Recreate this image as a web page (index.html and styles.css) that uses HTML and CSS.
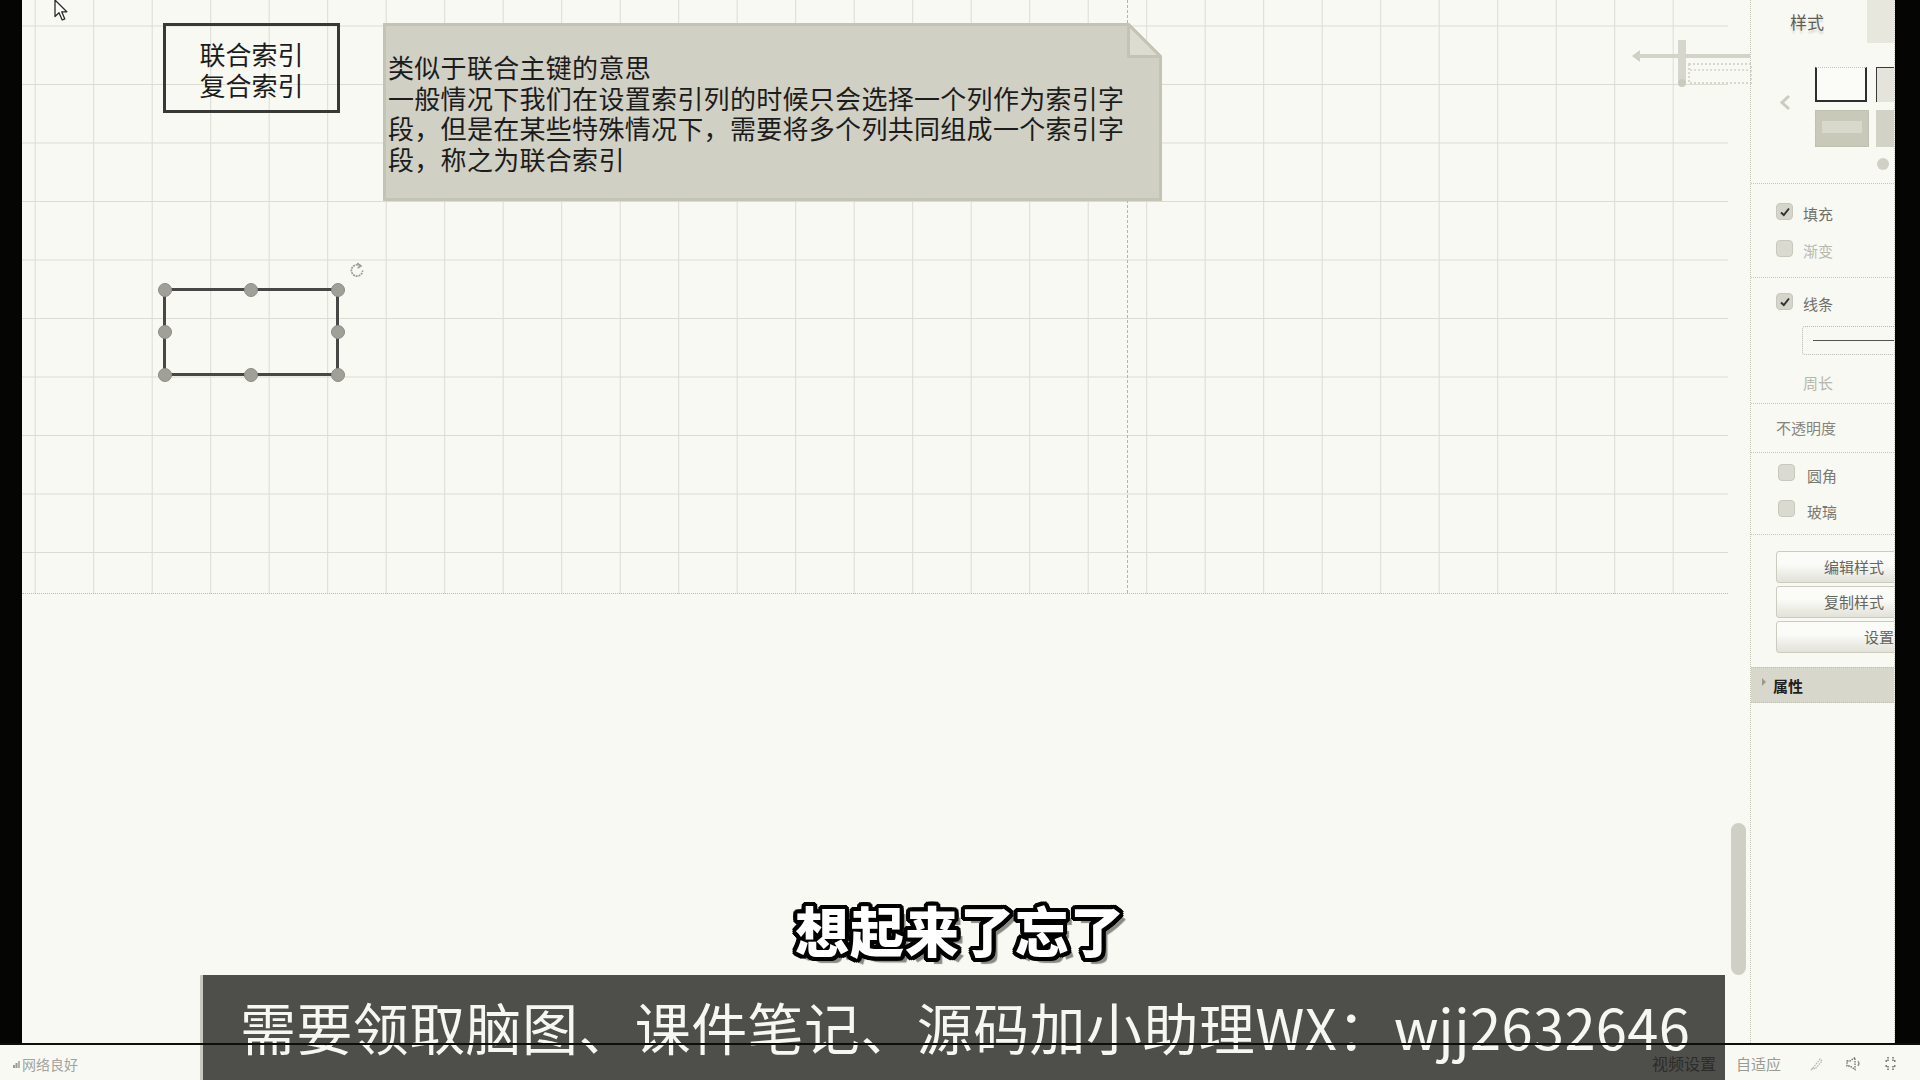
FILE: index.html
```html
<!DOCTYPE html>
<html lang="zh-CN">
<head>
<meta charset="utf-8">
<title>联合索引</title>
<link rel="stylesheet" href="styles.css">
</head>
<body>
<div class="screen">
  <div class="main">
    <div class="edge-left"></div>
    <div class="workspace">
      <div class="canvas">
        <div class="grid"></div>
        <div class="page-break"></div>

        <svg class="cursor" viewBox="0 0 14 23" width="14" height="23">
          <path d="M1 1 L1 17.5 L5 13.8 L8.2 21 L10.8 19.9 L7.7 12.8 L12.8 12.8 Z" fill="#fbfbf8" stroke="#2a2a2a" stroke-width="1.3" stroke-linejoin="round"/>
        </svg>

        <div class="shape-box">联合索引<br>复合索引</div>

        <div class="note">
          <svg class="note-bg" viewBox="0 0 779 178" width="779" height="178">
            <path d="M1.5 1.5 H745.5 L777.5 33.5 V176.5 H1.5 Z" fill="#d0d0c4" stroke="#c4c4b4" stroke-width="3"/>
            <path d="M745.5 1.5 V33.5 H777.5 Z" fill="#dcdcd1" stroke="#c4c4b4" stroke-width="3" stroke-linejoin="round"/>
          </svg>
          <p class="note-text"><span class="nl">类似于联合主键的意思</span><span class="nl">一般情况下我们在设置索引列的时候只会选择一个列作为索引字</span><span class="nl">段，但是在某些特殊情况下，需要将多个列共同组成一个索引字</span><span class="nl">段，称之为联合索引</span></p>
        </div>

        <div class="selection">
          <span class="h h-tl"></span><span class="h h-tc"></span><span class="h h-tr"></span>
          <span class="h h-ml"></span><span class="h h-mr"></span>
          <span class="h h-bl"></span><span class="h h-bc"></span><span class="h h-br"></span>
        </div>
        <svg class="rotate" viewBox="0 0 16 17" width="16" height="17">
          <path d="M11.4 5 A5.6 5.6 0 1 0 13.6 9.6" fill="none" stroke="#9c9c94" stroke-width="1.7" stroke-dasharray="2 0.8"/>
          <path d="M8.2 2.2 L12 4.9 L8.6 7.2" fill="none" stroke="#9c9c94" stroke-width="1.6"/>
        </svg>

        <svg class="ghost" viewBox="0 0 120 50" width="120" height="50">
          <path d="M2 19 L10 13 L10 25 Z" fill="#cfcfc4"/>
          <line x1="8" y1="19" x2="120" y2="19" stroke="#d3d3c9" stroke-width="4"/>
          <rect x="48" y="3" width="8" height="43" fill="#d6d6cc"/>
          <circle cx="52" cy="46" r="4" fill="#cacabf"/>
          <rect x="59" y="27" width="62" height="19" fill="none" stroke="#d8d8ce" stroke-width="2" stroke-dasharray="2 2"/>
          <line x1="60" y1="33" x2="120" y2="33" stroke="#dedcd3" stroke-width="2" stroke-dasharray="2 2"/>
        </svg>
      </div>
      <div class="vscroll"><div class="thumb"></div></div>
    </div>

    <aside class="panel">
      <div class="tab-corner"></div>
      <section class="style-head">
        <div class="tab-title">样式</div>
        <div class="swatches">
          <svg class="chev" viewBox="0 0 12 17" width="12" height="17"><path d="M10 2 L3 8.5 L10 15" fill="none" stroke="#cbcbc0" stroke-width="3"/></svg>
          <div class="sw sw-plain"></div>
          <div class="sw sw-dots"></div>
          <div class="sw sw-fill"><span></span></div>
          <div class="sw sw-fill2"></div>
        </div>
        <div class="more-dot"></div>
      </section>

      <section class="sec sec-fill">
        <div class="row"><span class="cb on"><svg viewBox="0 0 12 12" width="12" height="12"><path d="M2 6.5 L4.8 9 L10 2.5" fill="none" stroke="#333" stroke-width="2"/></svg></span><span class="lbl dark">填充</span></div>
        <div class="row"><span class="cb off"></span><span class="lbl faint">渐变</span></div>
      </section>

      <section class="sec sec-line">
        <div class="row"><span class="cb on"><svg viewBox="0 0 12 12" width="12" height="12"><path d="M2 6.5 L4.8 9 L10 2.5" fill="none" stroke="#333" stroke-width="2"/></svg></span><span class="lbl dark">线条</span></div>
        <div class="line-select"><span class="line-sample"></span></div>
        <div class="perim">周长</div>
      </section>

      <section class="sec sec-opacity">
        <div class="opacity">不透明度</div>
      </section>

      <section class="sec sec-round">
        <div class="row"><span class="cb off"></span><span class="lbl mid">圆角</span></div>
        <div class="row"><span class="cb off"></span><span class="lbl mid">玻璃</span></div>
      </section>

      <section class="sec-btns">
        <div class="btn">编辑样式</div>
        <div class="btn">复制样式</div>
        <div class="btn btn-left">设置</div>
      </section>

      <div class="props-head"><span class="tri"></span>属性</div>
    </aside>
    <div class="edge-right"></div>
  </div>

  <div class="baseline"></div>

  <div class="statusbar">
    <div class="net">
      <svg viewBox="0 0 7 8" width="7" height="8"><rect x="0" y="5" width="2" height="3" fill="#9a9a92"/><rect x="2.5" y="3" width="2" height="5" fill="#9a9a92"/><rect x="5" y="1" width="2" height="7" fill="#b4b4ac"/></svg>
      <span>网络良好</span>
    </div>
    <div class="status-right">
      <span class="fit">自适应</span>
      <svg class="ico ico-pen" viewBox="0 0 13 15" width="13" height="15">
        <path d="M3 12 L10 3 L12 5 L5 13 Z" fill="none" stroke="#b9b9b1" stroke-width="1.3" stroke-dasharray="1.5 1"/>
        <path d="M1 14 L3 12" stroke="#b9b9b1" stroke-width="1.3"/>
      </svg>
      <svg class="ico ico-vol" viewBox="0 0 17 15" width="17" height="15">
        <path d="M2 5 H5 L10 1.5 V13.5 L5 10 H2 Z" fill="none" stroke="#6a6a64" stroke-width="1.3" stroke-dasharray="1.5 1"/>
        <path d="M13 5 Q15 7.5 13 10" fill="none" stroke="#8a8a84" stroke-width="1.2"/>
      </svg>
      <svg class="ico ico-exit" viewBox="0 0 13 15" width="13" height="15">
        <path d="M4 1 V5 H1 M9 1 V5 H12 M4 14 V10 H1 M9 14 V10 H12" fill="none" stroke="#555550" stroke-width="1.3" stroke-dasharray="1.5 1"/>
      </svg>
    </div>
  </div>

  <div class="subtitle">想起来了忘了</div>

  <div class="banner">
    <p class="banner-text">需要领取脑图、课件笔记、源码加小助理WX：wjj2632646</p>
    <span class="video-set">视频设置</span>
  </div>
</div>
</body>
</html>
```

FILE: styles.css
```css
* { box-sizing: border-box; margin: 0; padding: 0; }

html, body {
  width: 1920px;
  height: 1080px;
  overflow: hidden;
}

body {
  background: #f9f9f4;
  font-family: "Noto Sans CJK SC", "Noto Sans", sans-serif;
  color: #222;
}

.screen {
  position: relative;
  width: 1920px;
  height: 1080px;
  display: flex;
  flex-direction: column;
}

.main {
  display: flex;
  height: 1043px;
  flex: none;
}

.edge-left {
  width: 22px;
  flex: none;
  background: #050504;
}

.edge-right {
  width: 25px;
  flex: none;
  background: #050504;
}

.workspace {
  width: 1728px;
  flex: none;
  display: flex;
}

/* ---------- canvas ---------- */
.canvas {
  position: relative;
  width: 1706px;
  flex: none;
}

.grid {
  height: 594px;
  border-bottom: 1px dotted #b9b9af;
  background-image:
    linear-gradient(to right, #dcdcd3 1px, transparent 1px),
    linear-gradient(to bottom, #dcdcd3 1px, transparent 1px);
  background-size: 58.5px 58.5px;
  background-position: 12.7px 25.5px;
}

.page-break {
  position: absolute;
  left: 1105px;
  top: 0;
  height: 593px;
  border-left: 1px dashed #b3b3a9;
}

.cursor {
  position: absolute;
  left: 32px;
  top: -1px;
}

.shape-box {
  position: absolute;
  left: 141px;
  top: 23px;
  width: 177px;
  height: 90px;
  border: 3px solid #383836;
  padding-top: 12px;
  text-align: center;
  font-size: 26px;
  line-height: 31px;
  color: #1c1c1c;
}

.note {
  position: absolute;
  left: 361px;
  top: 23px;
  width: 779px;
  height: 178px;
}

.note-bg {
  position: absolute;
  left: 0;
  top: 0;
}

.note-text {
  position: relative;
  padding: 29px 0 0 5px;
  font-size: 26px;
  letter-spacing: 0.3px;
  color: #1c1c1c;
  white-space: nowrap;
}

.nl {
  display: block;
  height: 30.5px;
  line-height: 30.5px;
}

.selection {
  position: absolute;
  left: 141px;
  top: 288px;
  width: 176px;
  height: 88px;
  border: 3px solid #474745;
}

.h {
  position: absolute;
  width: 14px;
  height: 14px;
  border-radius: 50%;
  background: #a0a098;
  border: 1px solid #8c8c85;
}
.h-tl, .h-tc, .h-tr { top: -8.5px; }
.h-ml, .h-mr { top: calc(50% - 7px); }
.h-bl, .h-bc, .h-br { top: calc(100% - 5.5px); }
.h-tl, .h-ml, .h-bl { left: -8.5px; }
.h-tc, .h-bc { left: calc(50% - 7px); }
.h-tr, .h-mr, .h-br { left: calc(100% - 5.5px); }

.rotate {
  position: absolute;
  left: 327px;
  top: 261px;
}

.ghost {
  position: absolute;
  left: 1608px;
  top: 37px;
  overflow: visible;
}

.vscroll {
  width: 22px;
  flex: none;
  padding: 823px 0 0 3px;
}

.thumb {
  width: 15px;
  height: 152px;
  border-radius: 8px;
  background: #cfcfc5;
}

/* ---------- right panel ---------- */
.panel {
  position: relative;
  width: 145px;
  flex: none;
  border-left: 1px dotted #c2c2b7;
  border-right: 1px dotted #c9c9be;
  overflow: hidden;
  font-size: 15px;
}

.tab-corner {
  position: absolute;
  left: 116px;
  top: 0;
  width: 28px;
  height: 43px;
  background: #e7e7de;
}

.style-head {
  height: 184px;
  border-bottom: 1px dotted #c6c6bb;
  padding-top: 13px;
}

.tab-title {
  margin-left: 39px;
  font-size: 17px;
  line-height: 17px;
  height: 17px;
  color: #5e5e58;
  text-shadow: 0 3px 2px #d6d6cd;
}

.swatches {
  margin: 37px 0 0 28px;
  display: grid;
  grid-template-columns: 29px 54px 26px;
  grid-template-rows: 35px 37px;
  column-gap: 7px;
  row-gap: 8px;
}

.chev {
  grid-row: 1 / span 2;
  align-self: center;
  margin-bottom: 9px;
}

.sw-plain {
  width: 52px;
  border: 2px solid #2e2e2c;
  border-top: 1px dotted #c4c4b9;
  background: #fbfbf8;
}

.sw-dots {
  border-left: 1px solid #3a3a38;
  border-top: 1px solid #3a3a38;
  background: #e4e4dc;
}

.sw-fill {
  background: #c9c9b9;
  border: 1px dotted #b9b9aa;
  padding: 10px 6px;
}

.sw-fill span {
  display: block;
  height: 12px;
  background: #d8d8cc;
}

.sw-fill2 {
  background: #d2d2c6;
}

.more-dot {
  margin: 11px 0 0 126px;
  width: 12px;
  height: 12px;
  border-radius: 50%;
  background: #d0d0c6;
}

.sec {
  border-bottom: 1px dotted #c6c6bb;
}

.row {
  display: flex;
  align-items: center;
  height: 17px;
  padding-left: 25px;
}

.cb {
  width: 17px;
  height: 17px;
  flex: none;
  border-radius: 4px;
  background: #d5d5cb;
  border: 1px solid #c8c8bd;
  display: flex;
  align-items: center;
  justify-content: center;
}

.cb.off {
  background: #dadad0;
}

.lbl {
  margin-left: 10px;
  font-size: 15px;
  line-height: 17px;
  padding-top: 3px;
}

.lbl.dark { color: #707069; }
.lbl.faint { color: #b8b8ae; }
.lbl.mid { color: #7a7a73; }

.sec-fill {
  height: 94px;
  padding-top: 19px;
  display: flex;
  flex-direction: column;
  gap: 20px;
}

.sec-line {
  height: 126px;
  padding-top: 15px;
}

.line-select {
  margin: 16px 0 0 51px;
  width: 110px;
  height: 29px;
  border: 1px dotted #b9b9ae;
  border-radius: 3px;
  padding: 13px 0 0 10px;
}

.line-sample {
  display: block;
  height: 1px;
  background: #55554f;
}

.perim {
  margin: 18px 0 0 52px;
  font-size: 15px;
  line-height: 20px;
  color: #b6b6ac;
}

.sec-opacity {
  height: 49px;
  padding-top: 14px;
}

.opacity {
  margin-left: 25px;
  font-size: 15px;
  line-height: 20px;
  color: #85857e;
}

.sec-round {
  height: 82px;
  padding-top: 11px;
  display: flex;
  flex-direction: column;
  gap: 19px;
}

.sec-round .row { padding-left: 27px; }
.sec-round .lbl { margin-left: 12px; padding-top: 5px; }

.sec-btns {
  height: 132px;
  padding-top: 16px;
  display: flex;
  flex-direction: column;
  gap: 3px;
}

.btn {
  margin-left: 25px;
  width: 150px;
  height: 32px;
  flex: none;
  border: 1px solid #cbcbc0;
  border-radius: 3px;
  background: linear-gradient(to bottom, #fbfbf8 40%, #e2e2d9 100%);
  font-size: 15px;
  line-height: 30px;
  text-align: right;
  padding-right: 41px;
  color: #66665f;
}

.btn-left {
  text-align: left;
  padding: 0 0 0 87px;
  white-space: nowrap;
}

.props-head {
  height: 36px;
  border-top: 1px dotted #bfbfb4;
  border-bottom: 1px dotted #bfbfb4;
  background: #d7d7cc;
  display: flex;
  align-items: center;
  padding-left: 11px;
  font-size: 15px;
  font-weight: 700;
  color: #1e1e1c;
}

.tri {
  width: 0;
  height: 0;
  border-left: 4px solid #9a9a92;
  border-top: 4px solid transparent;
  border-bottom: 4px solid transparent;
  margin: 0 7px 6px 0;
}

/* ---------- bottom ---------- */
.baseline {
  position: relative;
  z-index: 5;
  height: 2px;
  flex: none;
  background: #0e0e0d;
}

.statusbar {
  height: 35px;
  flex: none;
  display: flex;
  align-items: center;
  justify-content: space-between;
  padding: 2px 23px 0 13px;
}

.net {
  display: flex;
  align-items: center;
  gap: 2px;
  font-size: 14px;
  color: #a3a39b;
}

.status-right {
  display: flex;
  align-items: center;
}

.fit {
  font-size: 15px;
  color: #9a9a92;
  margin-right: 29px;
}

.ico-pen { margin-right: 22px; }
.ico-vol { margin-right: 22px; }

.subtitle {
  position: absolute;
  left: 0;
  top: 899px;
  width: 1920px;
  text-align: center;
  font-size: 54px;
  line-height: 62px;
  font-weight: 900;
  letter-spacing: 1px;
  color: #ffffff;
  z-index: 6;
  text-shadow:
    4px 0 0 #000, -4px 0 0 #000, 0 4px 0 #000, 0 -4px 0 #000,
    3px 3px 0 #000, -3px 3px 0 #000, 3px -3px 0 #000, -3px -3px 0 #000,
    4px 2px 0 #000, -4px 2px 0 #000, 4px -2px 0 #000, -4px -2px 0 #000,
    2px 4px 0 #000, -2px 4px 0 #000, 2px -4px 0 #000, -2px -4px 0 #000,
    6px 6px 1px #8a8a84;
}

.banner {
  position: absolute;
  left: 200px;
  top: 975px;
  width: 1525px;
  height: 105px;
  z-index: 4;
  background: #4e4e4a;
  border-left: 3px solid #c9c9bf;
}

.banner-text {
  padding: 21px 0 0 37px;
  font-size: 56px;
  line-height: 60px;
  letter-spacing: 0.4px;
  color: #f6f6f2;
  white-space: nowrap;
}

.video-set {
  position: absolute;
  right: 9px;
  bottom: 8px;
  font-size: 16px;
  line-height: 18px;
  color: #2c2c2a;
}
```
